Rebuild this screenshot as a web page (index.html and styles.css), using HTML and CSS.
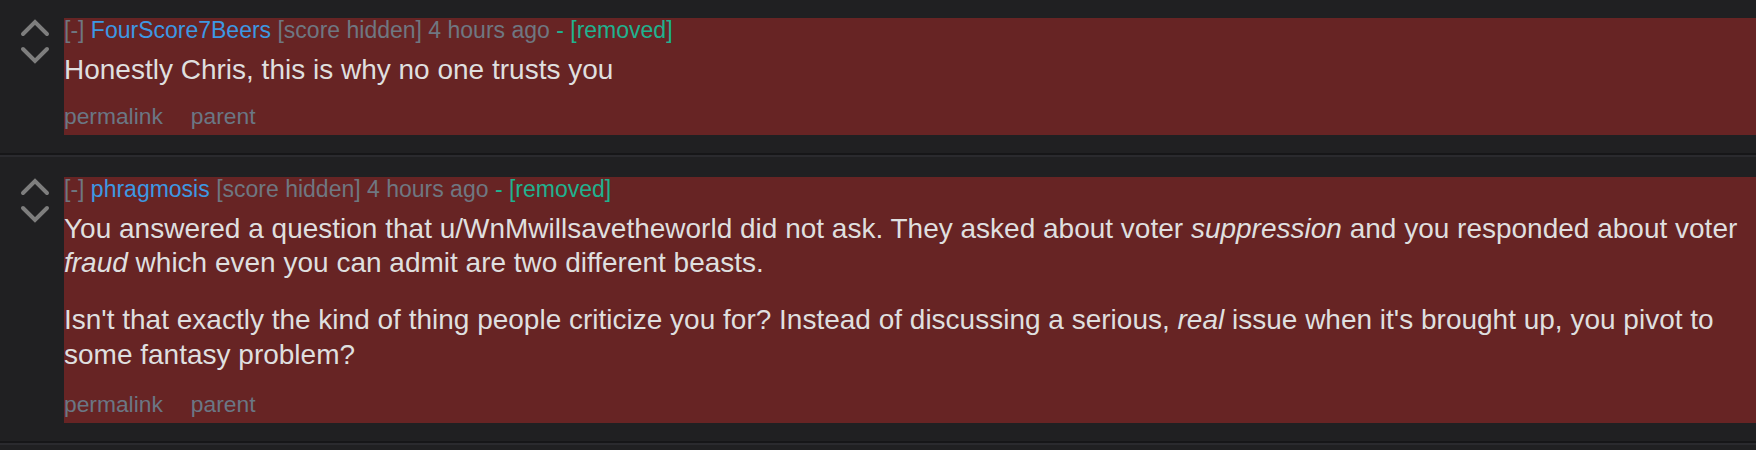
FILE: index.html
```html
<!DOCTYPE html>
<html lang="en">
<head>
<meta charset="utf-8">
<title>Comments</title>
<link rel="stylesheet" href="styles.css">
</head>
<body>
<div class="comments">
  <div class="comment">
    <div class="midcol">
      <svg class="arrow" viewBox="0 0 30 18" width="30" height="18"><polyline points="3,15 15,3 27,15"/></svg>
      <svg class="arrow down" viewBox="0 0 30 18" width="30" height="18"><polyline points="3,3 15,15 27,3"/></svg>
    </div>
    <div class="entry">
      <p class="tagline"><span class="expand">[-]</span> <span class="author">FourScore7Beers</span> <span class="meta">[score hidden] 4 hours ago</span> <span class="removed">- [removed]</span></p>
      <div class="md">
        <p>Honestly Chris, this is why no one trusts you</p>
      </div>
      <ul class="buttons">
        <li>permalink</li>
        <li>parent</li>
      </ul>
    </div>
  </div>
  <div class="comment">
    <div class="midcol">
      <svg class="arrow" viewBox="0 0 30 18" width="30" height="18"><polyline points="3,15 15,3 27,15"/></svg>
      <svg class="arrow down" viewBox="0 0 30 18" width="30" height="18"><polyline points="3,3 15,15 27,3"/></svg>
    </div>
    <div class="entry">
      <p class="tagline"><span class="expand">[-]</span> <span class="author">phragmosis</span> <span class="meta">[score hidden] 4 hours ago</span> <span class="removed">- [removed]</span></p>
      <div class="md">
        <p>You answered a question that u/WnMwillsavetheworld did not ask. They asked about voter <em>suppression</em> and you responded about voter <em>fraud</em> which even you can admit are two different beasts.</p>
        <p>Isn't that exactly the kind of thing people criticize you for? Instead of discussing a serious, <em>real</em> issue when it's brought up, you pivot to some fantasy problem?</p>
      </div>
      <ul class="buttons buttons-spaced">
        <li>permalink</li>
        <li>parent</li>
      </ul>
    </div>
  </div>
</div>
</body>
</html>
```

FILE: styles.css
```css
html, body {
  margin: 0;
  padding: 0;
  background: #202022;
}

body {
  font-family: "Liberation Sans", Arial, Helvetica, sans-serif;
  color: #dedede;
  overflow: hidden;
}

.comments {
  display: flex;
  flex-direction: column;
}

.comment {
  display: flex;
  padding: 20px 0 18px 0;
  border-bottom: 2px solid #161618;
  box-shadow: 0 2px 0 #2a2a2e;
  margin-bottom: 2px;
}

.comment:first-child {
  padding-top: 18px;
}

.midcol {
  flex: 0 0 64px;
  display: flex;
  flex-direction: column;
  gap: 9px;
  padding: 1px 0 0 20px;
  box-sizing: border-box;
}

.arrow {
  display: block;
  fill: none;
  stroke: #7e7e7e;
  stroke-width: 4;
  stroke-linecap: round;
  stroke-linejoin: miter;
}

.entry {
  flex: 1;
  background: #672424;
  padding: 0 8px 7px 0;
  min-width: 0;
}

.tagline {
  margin: 0;
  font-size: 23px;
  line-height: 24px;
  color: #6f7781;
  white-space: nowrap;
}

.author {
  color: #3d98e3;
}

.removed {
  color: #1fb28f;
}

.md {
  margin-top: 11px;
  font-size: 28px;
  line-height: 34.7px;
  color: #dfdfdf;
}

.md p {
  margin: 0;
}

.md p + p {
  margin-top: 22.3px;
}

.buttons {
  list-style: none;
  margin: 16px 0 0 0;
  padding: 0;
  display: flex;
  gap: 28px;
  font-size: 22.8px;
  line-height: 24px;
  color: #6b7784;
}

.buttons-spaced {
  margin-top: 19px;
}
```
